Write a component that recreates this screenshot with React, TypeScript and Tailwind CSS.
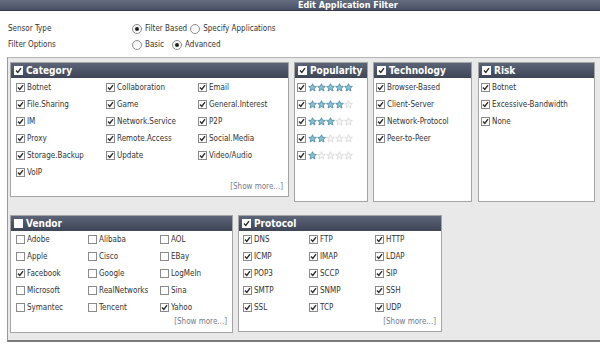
import React from 'react';

const categories = [
  'Botnet', 'Collaboration', 'Email',
  'File.Sharing', 'Game', 'General.Interest',
  'IM', 'Network.Service', 'P2P',
  'Proxy', 'Remote.Access', 'Social.Media',
  'Storage.Backup', 'Update', 'Video/Audio',
  'VoIP',
];

const vendors: [string, boolean][] = [
  ['Adobe', false], ['Alibaba', false], ['AOL', false],
  ['Apple', false], ['Cisco', false], ['EBay', false],
  ['Facebook', true], ['Google', false], ['LogMeIn', false],
  ['Microsoft', false], ['RealNetworks', false], ['Sina', false],
  ['Symantec', false], ['Tencent', false], ['Yahoo', true],
];

const protocols = [
  'DNS', 'FTP', 'HTTP',
  'ICMP', 'IMAP', 'LDAP',
  'POP3', 'SCCP', 'SIP',
  'SMTP', 'SNMP', 'SSH',
  'SSL', 'TCP', 'UDP',
];

const technologies = ['Browser-Based', 'Client-Server', 'Network-Protocol', 'Peer-to-Peer'];
const risks = ['Botnet', 'Excessive-Bandwidth', 'None'];

const Check = ({ checked = true, header = false }: { checked?: boolean; header?: boolean }) => (
  <span
    className={
      header
        ? 'flex h-[9px] w-[9px] shrink-0 items-center justify-center bg-white'
        : 'flex h-[9px] w-[9px] shrink-0 items-center justify-center border border-[#8a8a8a] bg-white'
    }
  >
    {checked && (
      <svg width="7" height="7" viewBox="0 0 7 7">
        <path d="M1 3.6 L2.8 5.4 L6 1.2" fill="none" stroke="#2a2a2a" strokeWidth="1.4" />
      </svg>
    )}
  </span>
);

const Radio = ({ checked }: { checked: boolean }) => (
  <span className="flex h-[10px] w-[10px] shrink-0 items-center justify-center rounded-full border border-[#8d8d8d] bg-gradient-to-b from-[#f2f2f2] to-white">
    {checked && <span className="h-[4px] w-[4px] rounded-full bg-[#222]" />}
  </span>
);

const Star = ({ on }: { on: boolean }) => (
  <svg width="9" height="9" viewBox="0 0 10 10">
    <path
      d="M5 0.8 L6.2 3.6 L9.3 3.8 L6.9 5.8 L7.7 8.9 L5 7.2 L2.3 8.9 L3.1 5.8 L0.7 3.8 L3.8 3.6 Z"
      fill={on ? '#8cc0d3' : '#f6f6f6'}
      stroke={on ? '#4f8ea8' : '#d9d9d9'}
      strokeWidth="1"
      strokeLinejoin="round"
    />
  </svg>
);

const Panel = ({
  title,
  checked = true,
  className,
  children,
}: {
  title: string;
  checked?: boolean;
  className: string;
  children: React.ReactNode;
}) => (
  <div className={`flex flex-col border border-[#a4a4a4] bg-white ${className}`}>
    <div className="flex h-[15px] items-center gap-[3px] bg-gradient-to-b from-[#5c6477] to-[#3e4557] pl-[3px] text-[10px] font-bold text-white">
      <Check header checked={checked} />
      <span className="leading-none">{title}</span>
    </div>
    {children}
  </div>
);

const Item = ({ label, checked = true }: { label: string; checked?: boolean }) => (
  <div className="flex h-[17px] items-center gap-[2px] text-[#333]">
    <Check checked={checked} />
    <span className="whitespace-nowrap leading-none">{label}</span>
  </div>
);

const ShowMore = () => (
  <div className="flex h-[12px] items-center justify-end pr-[5px] text-[#737c8c]">[Show more...]</div>
);

export default function App() {
  return (
    <div className="flex h-[357px] w-[600px] flex-col overflow-hidden bg-white font-['DejaVu_Sans_Condensed','DejaVu_Sans',sans-serif] text-[8px]">
      {/* Title bar */}
      <div className="flex h-[11px] shrink-0 items-center border-b border-[#33384a] bg-gradient-to-b from-[#646c80] to-[#4b5164] pl-[298px] text-[9px] font-bold leading-none text-white">
        Edit Application Filter
      </div>

      {/* Sensor options */}
      <div className="flex flex-col pl-[8px] pt-[10px] text-[#333]">
        <div className="flex h-[16px] items-center">
          <span className="w-[124px]">Sensor Type</span>
          <Radio checked />
          <span className="ml-[3px] mr-[3px]">Filter Based</span>
          <Radio checked={false} />
          <span className="ml-[3px]">Specify Applications</span>
        </div>
        <div className="flex h-[16px] items-center">
          <span className="w-[124px]">Filter Options</span>
          <Radio checked={false} />
          <span className="ml-[3px] mr-[8px]">Basic</span>
          <Radio checked />
          <span className="ml-[3px]">Advanced</span>
        </div>
      </div>

      {/* Filter panels */}
      <div className="ml-[7px] mt-[4px] flex h-[285px] flex-col gap-[13px] border-b-2 border-l border-t border-b-[#7a7a7a] border-l-[#9a9a9a] border-t-[#b4b4b4] bg-[#e9e9e9] pl-[2px] pt-[4px]">
        <div className="flex items-start">
          <Panel title="Category" className="h-[135px] w-[279px]">
            <div className="grid grid-cols-[90px_92px_1fr] pl-[5px] pt-[1px]">
              {categories.map((c) => (
                <Item key={c} label={c} />
              ))}
            </div>
            <ShowMore />
          </Panel>

          <Panel title="Popularity" className="ml-[5px] h-[140px] w-[74px]">
            <div className="flex flex-col pl-[2px] pt-[1px]">
              {[5, 4, 3, 2, 1].map((n) => (
                <div key={n} className="flex h-[17px] items-center gap-[1px]">
                  <Check />
                  <span className="ml-[1px] flex">
                    {[0, 1, 2, 3, 4].map((i) => (
                      <Star key={i} on={i < n} />
                    ))}
                  </span>
                </div>
              ))}
            </div>
          </Panel>

          <Panel title="Technology" className="ml-[5px] h-[140px] w-[99px]">
            <div className="flex flex-col pl-[2px] pt-[1px]">
              {technologies.map((t) => (
                <Item key={t} label={t} />
              ))}
            </div>
          </Panel>

          <Panel title="Risk" className="ml-[6px] h-[140px] w-[117px]">
            <div className="flex flex-col pl-[2px] pt-[1px]">
              {risks.map((r) => (
                <Item key={r} label={r} />
              ))}
            </div>
          </Panel>
        </div>

        <div className="flex items-start">
          <Panel title="Vendor" checked={false} className="h-[118px] w-[223px]">
            <div className="grid grid-cols-[72px_72px_1fr] pl-[5px]">
              {vendors.map(([v, on]) => (
                <Item key={v} label={v} checked={on} />
              ))}
            </div>
            <ShowMore />
          </Panel>

          <Panel title="Protocol" className="ml-[5px] h-[117px] w-[204px]">
            <div className="grid grid-cols-[66px_66px_1fr] pl-[4px]">
              {protocols.map((p) => (
                <Item key={p} label={p} />
              ))}
            </div>
            <ShowMore />
          </Panel>
        </div>
      </div>
    </div>
  );
}
